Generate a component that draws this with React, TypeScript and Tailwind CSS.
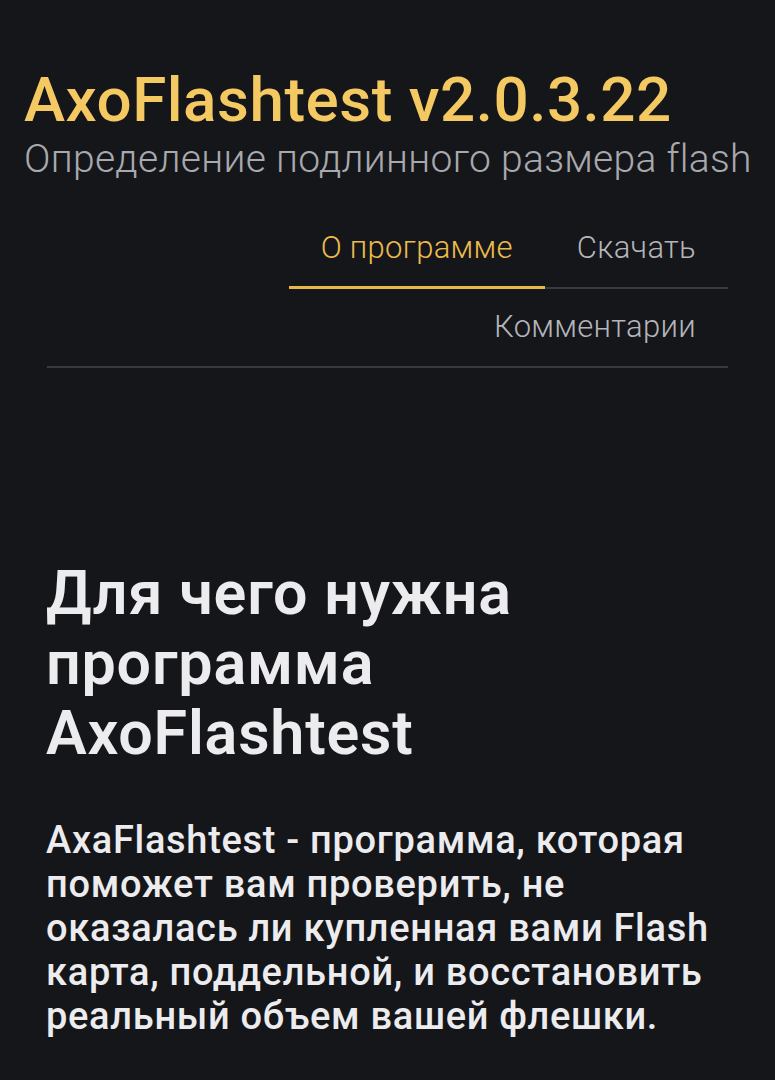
import { useState } from 'react';

const tabs = ['О программе', 'Скачать', 'Комментарии'];

const App = () => {
  const [active, setActive] = useState(0);

  return (
    <div
      className="min-h-[1080px] w-full bg-[#15161a] overflow-hidden"
      style={{ fontFamily: 'Roboto, "Noto Sans", sans-serif' }}
    >
      {/* HEADER */}
      <header className="px-6 pt-[63px]">
        <h1 className="text-[62px] leading-[74px] font-medium text-[#f5c962] tracking-[0.5px] whitespace-nowrap">
          AxoFlashtest v2.0.3.22
        </h1>
        <p className="text-[39px] leading-[48px] font-light text-[#a8a9ae] tracking-[0.3px] whitespace-nowrap -mt-[2px]">
          Определение подлинного размера flash
        </p>
      </header>

      {/* TABS */}
      <nav className="mx-[47px] mt-[27px]">
        <div className="flex justify-end">
          {tabs.slice(0, 2).map((t, i) => (
            <button
              key={t}
              onClick={() => setActive(i)}
              className={`h-[79px] px-8 text-[31px] font-light tracking-[0.3px] border-b-2 ${
                active === i
                  ? 'text-[#ebbb4e] border-[#e7b848] border-b-[3px]'
                  : 'text-[#b4b5ba] border-[#393a3f]'
              }`}
            >
              {t}
            </button>
          ))}
        </div>
        <button
          onClick={() => setActive(2)}
          className={`w-full h-[79px] pr-8 text-right text-[31px] font-light tracking-[0.3px] border-b-2 ${
            active === 2 ? 'text-[#ebbb4e] border-[#e7b848]' : 'text-[#b4b5ba] border-[#393a3f]'
          }`}
        >
          {tabs[2]}
        </button>
      </nav>

      {/* CONTENT */}
      <main className="pl-[46px] pr-[47px] pt-[190px]">
        <h2 className="text-[61px] leading-[70px] font-semibold tracking-[0.8px] text-[#ececef]">
          Для чего нужна программа AxoFlashtest
        </h2>
        <p className="mt-[50px] text-[38px] leading-[44px] font-medium tracking-[0.7px] text-[#ececef]">
          AxaFlashtest - программа, которая поможет вам проверить, не оказалась ли купленная вами Flash карта, поддельной, и восстановить реальный объем вашей флешки.
        </p>
      </main>
    </div>
  );
};

export default App;
